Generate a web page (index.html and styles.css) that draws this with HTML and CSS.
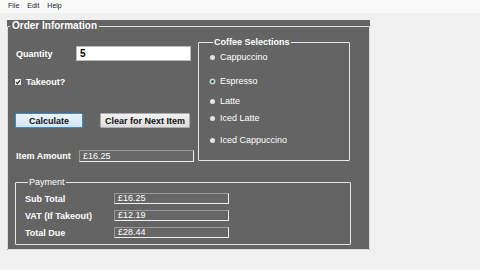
FILE: index.html
```html
<!DOCTYPE html>
<html lang="en">
<head>
<meta charset="UTF-8" />
<title>Order Information</title>
<link rel="stylesheet" href="styles.css">
</head>
<body>
<div class="menubar">
  <span>File</span><span>Edit</span><span>Help</span>
</div>

<div class="panel">
  <fieldset class="group order">
    <legend>Order Information</legend>
    <div class="content">
      <div class="top">
        <div class="left">
          <div class="row qty-row">
            <label class="lbl qty-lbl">Quantity</label>
            <div class="qty-input">5</div>
          </div>
          <div class="row take-row">
            <span class="check">
              <svg width="6" height="6" viewBox="0 0 6 6"><path d="M1 3.2 L2.4 4.6 L5 1.4" stroke="#222" stroke-width="1.2" fill="none"/></svg>
            </span>
            <label class="lbl">Takeout?</label>
          </div>
          <div class="row btn-row">
            <button class="btn btn-calc">Calculate</button>
            <button class="btn">Clear for Next Item</button>
          </div>
          <div class="row amt-row">
            <label class="lbl amt-lbl">Item Amount</label>
            <div class="field amt-field">£16.25</div>
          </div>
        </div>

        <fieldset class="group coffee">
          <legend>Coffee Selections</legend>
          <div class="radio"><span class="dot"></span>Cappuccino</div>
          <div class="radio"><span class="dot on"></span>Espresso</div>
          <div class="radio"><span class="dot"></span>Latte</div>
          <div class="radio"><span class="dot"></span>Iced Latte</div>
          <div class="radio"><span class="dot"></span>Iced Cappuccino</div>
        </fieldset>
      </div>

      <fieldset class="group payment">
        <legend>Payment</legend>
        <div class="pay-row"><label class="lbl pay-lbl">Sub Total</label><div class="field">£16.25</div></div>
        <div class="pay-row"><label class="lbl pay-lbl">VAT (If Takeout)</label><div class="field">£12.19</div></div>
        <div class="pay-row"><label class="lbl pay-lbl">Total Due</label><div class="field">£28.44</div></div>
      </fieldset>
    </div>
  </fieldset>
</div>
</body>
</html>
```

FILE: styles.css
```css
*{box-sizing:border-box;margin:0;padding:0;font-family:"Liberation Sans",Arial,sans-serif}

body{background:#f0f0f0;width:480px;height:270px;overflow:hidden}

/* menu */
.menubar{
  height:13px;background:#f9f9f9;
  display:flex;gap:8px;padding-left:8px;
  font-size:7px;line-height:11px;color:#222;
}

.panel{
  margin:7px 0 0 7px;
  width:363px;height:230px;
  background:#646464;
}

/* group boxes */
.group{border:1px solid #e6e6e6;border-radius:1px;color:#fff}
.group legend{font-weight:bold;font-size:9px;line-height:10px;padding:0 1px;margin-left:3px;color:#fff}
.order{height:100%;border-color:#ddd}
.order > legend{font-size:10px;line-height:12px;margin-left:2px;padding:0 2px}

.content{padding:5px 0 0 7px}
.top{display:flex;gap:3px}
.left{width:180px}

.row{display:flex;align-items:center}
.lbl{font-weight:bold;font-size:9px;color:#fff}

.qty-row{margin-top:9px;height:15px}
.qty-lbl{width:61px;padding-left:1px}
.qty-input{
  width:115px;height:15px;background:#fff;border:1px solid #bbb;
  font-size:10px;font-weight:bold;color:#000;line-height:13px;padding-left:3px
}

.take-row{margin-top:16px;height:10px;gap:5px}
.check{width:6px;height:6px;background:#eee;display:flex}

.btn-row{margin-top:26px;gap:17px}
.btn{
  height:15px;font-size:9px;font-weight:bold;color:#111;white-space:nowrap;
  background:linear-gradient(#f2f2f2,#dcdcdc);border:1px solid #adadad;
  border-radius:1px;padding:0;width:90px
}
.btn-calc{width:68px;background:linear-gradient(#eaf3fb,#d6e6f4);border-color:#3c8cc8}

.amt-row{margin-top:22px;height:12px}
.amt-lbl{width:64px;padding-left:1px}
.field{
  width:115px;height:11px;background:#666;
  border:1px solid #eee;border-top-color:#999;border-left-color:#999;
  font-size:9px;line-height:9px;padding-left:3px;color:#fff
}
.amt-field{height:12px;line-height:10px}

/* coffee radios */
.coffee{width:152px;height:124px;padding-left:11px}
.radio{display:flex;align-items:center;gap:5px;height:10px;font-size:9px;color:#fff}
.radio:nth-of-type(1){margin-top:5px}
.radio:nth-of-type(2){margin-top:14px}
.radio:nth-of-type(3){margin-top:10px}
.radio:nth-of-type(4){margin-top:7px}
.radio:nth-of-type(5){margin-top:12px}
.dot{width:5px;height:5px;border-radius:50%;background:#e4e4e4}
.dot.on{background:#555;border:1px solid #dfe9ef;box-shadow:0 0 0 .5px #9cc}

/* payment */
.payment{width:336px;margin-top:15px;padding:0 0 6px 9px}
.payment legend{font-weight:normal;font-size:9px}
.pay-row{display:flex;align-items:center;height:11px;margin-top:6px}
.pay-lbl{width:89px}
```
